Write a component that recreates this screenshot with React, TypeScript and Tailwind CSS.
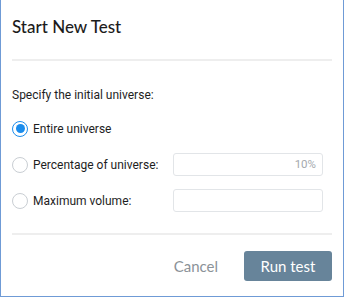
import React from "react";

function Radio({ checked }: { checked?: boolean }) {
  return (
    <span
      className={
        "flex h-[16px] w-[16px] shrink-0 items-center justify-center rounded-full border " +
        (checked ? "border-[#1a8cec] border-[1.5px]" : "border-[#c9ced3]")
      }
    >
      {checked && <span className="h-[9px] w-[9px] rounded-full bg-[#1a8cec]" />}
    </span>
  );
}

export default function App() {
  return (
    <div className="h-[297px] w-[344px] border-x border-b border-[#6f9bd6] bg-white font-['Roboto',sans-serif] text-[#1e1e1e]">
      <div className="px-[11px]">
        <h2 className="pt-[16px] pb-[21px] font-['Lato',sans-serif] text-[17px] leading-[22px] font-medium text-[#1c1c1c]">
          Start New Test
        </h2>
        <div className="h-[2px] bg-[#eeeeee]" />
        <p className="mt-[26px] text-[12px] leading-[16px]">
          Specify the initial universe:
        </p>
        <div className="mt-[14px] flex flex-col gap-[13px] text-[12px]">
          <label className="flex h-[23px] items-center gap-[5px]">
            <Radio checked />
            <span>Entire universe</span>
          </label>
          <label className="flex h-[23px] items-center">
            <span className="flex w-[161px] items-center gap-[5px]">
              <Radio />
              <span>Percentage of universe:</span>
            </span>
            <span className="flex h-[23px] w-[150px] items-center justify-end rounded-[3px] border border-[#e2e5e8] px-[6px] text-[11.5px] text-[#a4a9ae]">
              10%
            </span>
          </label>
          <label className="flex h-[23px] items-center">
            <span className="flex w-[161px] items-center gap-[5px]">
              <Radio />
              <span>Maximum volume:</span>
            </span>
            <span className="h-[23px] w-[150px] rounded-[3px] border border-[#e2e5e8]" />
          </label>
        </div>
        <div className="mt-[21px] h-[2px] bg-[#eeeeee]" />
        <div className="mt-[16px] flex items-center justify-end gap-[26px] font-['Lato',sans-serif] text-[15px]">
          <span className="text-[#8b9298]">Cancel</span>
          <button className="h-[30px] w-[88px] rounded-[3px] bg-[#67849a] text-[15px] text-white">
            Run test
          </button>
        </div>
      </div>
    </div>
  );
}
